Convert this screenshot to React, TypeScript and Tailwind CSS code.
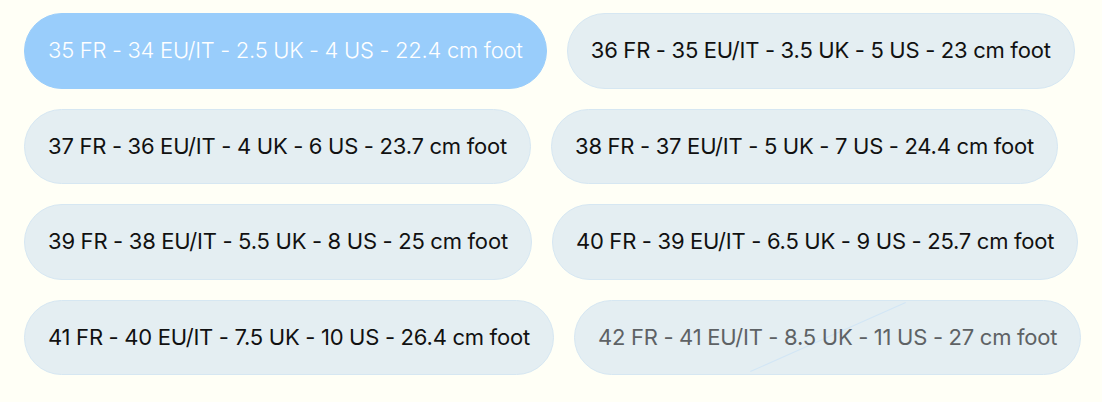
import React from "react";

type Size = { label: string; state: "selected" | "normal" | "disabled" };

const rows: Size[][] = [
  [
    { label: "35 FR - 34 EU/IT - 2.5 UK - 4 US - 22.4 cm foot", state: "selected" },
    { label: "36 FR - 35 EU/IT - 3.5 UK - 5 US - 23 cm foot", state: "normal" },
  ],
  [
    { label: "37 FR - 36 EU/IT - 4 UK - 6 US - 23.7 cm foot", state: "normal" },
    { label: "38 FR - 37 EU/IT - 5 UK - 7 US - 24.4 cm foot", state: "normal" },
  ],
  [
    { label: "39 FR - 38 EU/IT - 5.5 UK - 8 US - 25 cm foot", state: "normal" },
    { label: "40 FR - 39 EU/IT - 6.5 UK - 9 US - 25.7 cm foot", state: "normal" },
  ],
  [
    { label: "41 FR - 40 EU/IT - 7.5 UK - 10 US - 26.4 cm foot", state: "normal" },
    { label: "42 FR - 41 EU/IT - 8.5 UK - 11 US - 27 cm foot", state: "disabled" },
  ],
];

function Pill({ s }: { s: Size }) {
  if (s.state === "selected") {
    return (
      <button className="relative flex h-[75.5px] items-center whitespace-nowrap rounded-full border border-[#99cdfb] bg-[#99cdfb] px-[23px] text-[22px] font-light tracking-[-0.18px] [word-spacing:-0.3px] text-white">
        {s.label}
      </button>
    );
  }
  if (s.state === "disabled") {
    return (
      <button className="relative flex h-[75.5px] items-center overflow-hidden whitespace-nowrap rounded-full border border-[#d6e7f2] bg-[#e4eef2] px-[23px] text-[22px] tracking-[-0.18px] [word-spacing:-0.3px] text-[#5e6265]">
        <span className="pointer-events-none absolute left-1/2 top-1/2 h-px w-[170px] -translate-x-1/2 -translate-y-1/2 -rotate-[24deg] bg-[#d2e6f5]" />
        <span className="relative">{s.label}</span>
      </button>
    );
  }
  return (
    <button className="relative flex h-[75.5px] items-center whitespace-nowrap rounded-full border border-[#d6e7f2] bg-[#e4eef2] px-[23px] text-[22px] tracking-[-0.18px] [word-spacing:-0.3px] text-[#111111]">
      {s.label}
    </button>
  );
}

export default function App() {
  return (
    <div
      className="h-[402px] w-[1102px] overflow-hidden bg-[#fffff6] pl-[24px] pt-[13px]"
      style={{ fontFamily: "Inter, 'Noto Sans', sans-serif" }}
    >
      <div className="flex flex-col gap-[20px]">
        {rows.map((r, i) => (
          <div key={i} className="flex gap-[20px]">
            {r.map((s) => (
              <Pill key={s.label} s={s} />
            ))}
          </div>
        ))}
      </div>
    </div>
  );
}
